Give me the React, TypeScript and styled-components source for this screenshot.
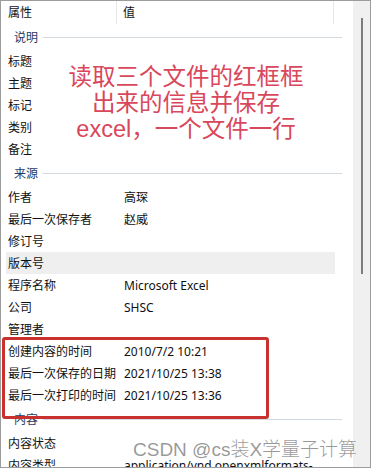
import React from 'react';
import styled, { createGlobalStyle } from 'styled-components';

const GlobalStyle = createGlobalStyle`
  html, body {
    margin: 0;
    padding: 0;
    background: #ffffff;
  }
  body {
    font-family: "Noto Sans", "Noto Sans CJK SC", sans-serif;
  }
`;

const Frame = styled.div`
  position: relative;
  width: 371px;
  height: 468px;
  box-sizing: border-box;
  border: 1px solid #9c9c9c;
  overflow: hidden;
  display: flex;
  background: #ffffff;
`;

const List = styled.div`
  flex: 1;
  display: flex;
  flex-direction: column;
  font-size: 12px;
  color: #111111;
`;

const Header = styled.div`
  display: flex;
  height: 23px;
  flex-shrink: 0;
`;

const HeaderCell = styled.div<{ $width: number; $pad: number }>`
  width: ${p => p.$width}px;
  padding-left: ${p => p.$pad}px;
  padding-top: 3px;
  box-sizing: border-box;
  border-right: 1px solid #e6e6e6;
  line-height: 18px;
`;

const Section = styled.div`
  display: flex;
  align-items: center;
  gap: 5px;
  height: 26px;
  flex-shrink: 0;
  padding-left: 13px;
  margin-right: 11px;
  color: #1e3b63;
`;

const SectionLine = styled.div`
  flex: 1;
  height: 1px;
  background: #d3d9e0;
`;

const Row = styled.div<{ $active?: boolean }>`
  display: grid;
  grid-template-columns: 116px 1fr;
  align-items: center;
  height: 22px;
  flex-shrink: 0;
  margin: 0 18px 0 5px;
  padding-left: 2px;
  background: ${p => (p.$active ? '#efefef' : 'transparent')};
  white-space: nowrap;
`;

const ScrollTrack = styled.div`
  width: 17px;
  flex-shrink: 0;
  background: #f0f0f0;
  display: flex;
  justify-content: center;
  padding-top: 17px;
  box-sizing: border-box;
`;

const ScrollThumb = styled.div`
  width: 2px;
  height: 256px;
  background: #7d7d7d;
  margin-left: 1px;
`;

const Note = styled.div`
  position: absolute;
  left: 60px;
  top: 63px;
  width: 250px;
  display: flex;
  flex-direction: column;
  align-items: center;
  font-family: "Liberation Sans", "Noto Sans CJK SC", sans-serif;
  font-size: 23.5px;
  line-height: 26px;
  color: #d8475b;
  background: rgba(255, 255, 255, 0.9);
`;

const RedBox = styled.div`
  position: absolute;
  left: 1px;
  top: 336px;
  width: 267px;
  height: 82px;
  box-sizing: border-box;
  border: 3px solid #c8312e;
  border-radius: 3px;
`;

const Watermark = styled.div`
  position: absolute;
  left: 132px;
  top: 437px;
  font-family: "Liberation Sans", "Noto Sans CJK SC", sans-serif;
  font-size: 19px;
  font-weight: 300;
  line-height: 24px;
  color: rgba(120, 120, 120, 0.75);
  white-space: nowrap;
`;

type Item = { label: string; value?: string; active?: boolean };
type Group = { title: string; items: Item[] };

const groups: Group[] = [
  {
    title: '说明',
    items: [{ label: '标题' }, { label: '主题' }, { label: '标记' }, { label: '类别' }, { label: '备注' }],
  },
  {
    title: '来源',
    items: [
      { label: '作者', value: '高琛' },
      { label: '最后一次保存者', value: '赵威' },
      { label: '修订号' },
      { label: '版本号', active: true },
      { label: '程序名称', value: 'Microsoft Excel' },
      { label: '公司', value: 'SHSC' },
      { label: '管理者' },
      { label: '创建内容的时间', value: '2010/7/2 10:21' },
      { label: '最后一次保存的日期', value: '2021/10/25 13:38' },
      { label: '最后一次打印的时间', value: '2021/10/25 13:36' },
    ],
  },
  {
    title: '内容',
    items: [
      { label: '内容状态' },
      { label: '内容类型', value: 'application/vnd.openxmlformats-' },
    ],
  },
];

export default function App() {
  return (
    <>
      <GlobalStyle />
      <Frame>
        <List>
          <Header>
            <HeaderCell $width={116} $pad={7}>属性</HeaderCell>
            <HeaderCell $width={217} $pad={6}>值</HeaderCell>
          </Header>
          {groups.map(group => (
            <React.Fragment key={group.title}>
              <Section>
                {group.title}
                <SectionLine />
              </Section>
              {group.items.map(item => (
                <Row key={item.label} $active={item.active}>
                  <span>{item.label}</span>
                  <span>{item.value ?? ''}</span>
                </Row>
              ))}
            </React.Fragment>
          ))}
        </List>
        <ScrollTrack>
          <ScrollThumb />
        </ScrollTrack>
        <Note>
          <span>读取三个文件的红框框</span>
          <span>出来的信息并保存</span>
          <span>excel，一个文件一行</span>
        </Note>
        <RedBox />
        <Watermark>CSDN @cs装X学量子计算</Watermark>
      </Frame>
    </>
  );
}
